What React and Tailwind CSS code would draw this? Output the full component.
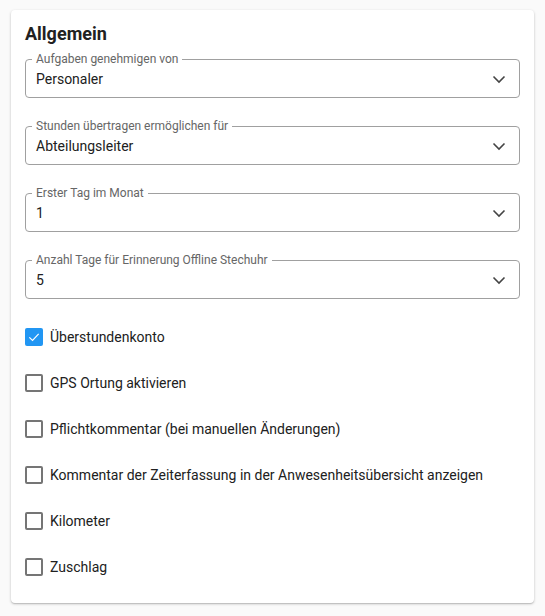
import React, { useState } from 'react';

const selects = [
  { label: 'Aufgaben genehmigen von', value: 'Personaler' },
  { label: 'Stunden übertragen ermöglichen für', value: 'Abteilungsleiter' },
  { label: 'Erster Tag im Monat', value: '1' },
  { label: 'Anzahl Tage für Erinnerung Offline Stechuhr', value: '5' },
];

const initialChecks = [
  { label: 'Überstundenkonto', checked: true },
  { label: 'GPS Ortung aktivieren', checked: false },
  { label: 'Pflichtkommentar (bei manuellen Änderungen)', checked: false },
  { label: 'Kommentar der Zeiterfassung in der Anwesenheitsübersicht anzeigen', checked: false },
  { label: 'Kilometer', checked: false },
  { label: 'Zuschlag', checked: false },
];

const Chevron = () => (
  <svg width="24" height="24" viewBox="0 0 24 24" className="text-[#444]">
    <path d="M6.5 9.5 12 15l5.5-5.5" fill="none" stroke="currentColor" strokeWidth="1.6" />
  </svg>
);

const SelectField = ({ label, value }) => (
  <div className="relative h-[39px] rounded border border-[#a0a0a0] flex items-center pl-[10px] pr-[8px]">
    <span className="absolute -top-[9px] left-[6px] bg-white px-[4px] text-[12px] leading-[16px] text-[#666]">
      {label}
    </span>
    <span className="flex-1 text-[14px] text-[#212121] pt-[1px]">{value}</span>
    <Chevron />
  </div>
);

const CheckRow = ({ label, checked, onToggle }) => (
  <label className="h-[46px] flex items-center gap-[7px] cursor-pointer">
    {checked ? (
      <span className="w-[18px] h-[18px] rounded-[2px] bg-[#2196f3] flex items-center justify-center">
        <svg width="14" height="14" viewBox="0 0 24 24">
          <path d="M4 12.5 9.5 18 20 6.5" fill="none" stroke="white" strokeWidth="2" />
        </svg>
      </span>
    ) : (
      <span className="w-[18px] h-[18px] rounded-[2px] border-2 border-[#757575]" />
    )}
    <input type="checkbox" className="hidden" checked={checked} onChange={onToggle} />
    <span className="text-[14px] text-[#212121]">{label}</span>
  </label>
);

export default function App() {
  const [checks, setChecks] = useState(initialChecks);

  const toggle = (i) => {
    setChecks(checks.map((c, idx) => (idx === i ? { ...c, checked: !c.checked } : c)));
  };

  return (
    <div className="min-h-[616px] bg-[#fafafa] pt-[10px] pl-[11px]" style={{ fontFamily: 'Roboto, "Noto Sans", sans-serif' }}>
      <div className="w-[523px] h-[593px] bg-white rounded shadow-[0_1px_3px_rgba(0,0,0,0.2),0_1px_1px_rgba(0,0,0,0.12)] pt-[12px] px-[14px]">
        <h2 className="text-[18px] leading-[24px] font-bold text-[#212121]">Allgemein</h2>
        <div className="mt-[13px] flex flex-col gap-[28px]">
          {selects.map((s) => (
            <SelectField key={s.label} {...s} />
          ))}
        </div>
        <div className="mt-[15px] flex flex-col">
          {checks.map((c, i) => (
            <CheckRow key={c.label} {...c} onToggle={() => toggle(i)} />
          ))}
        </div>
      </div>
    </div>
  );
}
